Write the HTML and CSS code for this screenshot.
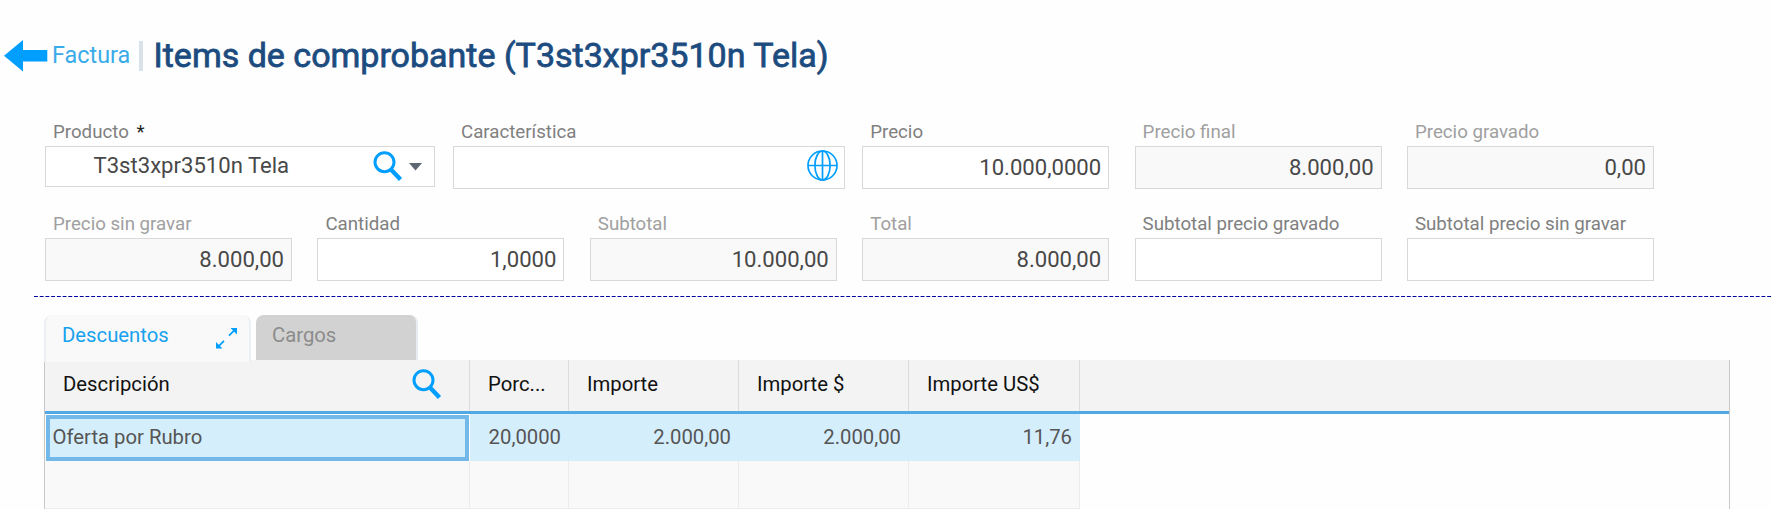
FILE: index.html
```html
<!DOCTYPE html>
<html lang="es">
<head>
<meta charset="utf-8">
<title>Items de comprobante</title>
<link rel="stylesheet" href="styles.css">
</head>
<body>
<header class="head">
  <svg class="back" width="44" height="32" viewBox="0 0 44 32"><path d="M0 15.8 19 0V10H43.3V21.5H19V31.5Z" fill="#009fff"/></svg>
  <a class="crumb">Factura</a>
  <span class="bar"></span>
  <h1 class="title">Items de comprobante (T3st3xpr3510n Tela)</h1>
</header>

<form class="form">
  <div class="row">
    <div class="field wide">
      <label class="label">Producto <span class="req">*</span></label>
      <div class="input combo">
        <span class="combo-text">T3st3xpr3510n Tela</span>
        <svg class="lens" width="30" height="31" viewBox="0 0 30 31"><circle cx="11.5" cy="11.2" r="9.5" fill="none" stroke="#009fff" stroke-width="3"/><path d="M17.5 18 27.5 28.5" stroke="#009fff" stroke-width="4.4"/></svg>
        <svg class="caret" width="13" height="8" viewBox="0 0 13 8"><path d="M0 0H13L6.5 7.5Z" fill="#5d6672"/></svg>
      </div>
    </div>
    <div class="field wide">
      <label class="label">Característica</label>
      <div class="input">
        <svg class="globe" width="31" height="31" viewBox="0 0 31 31" fill="none" stroke="#009fff" stroke-width="1.7"><circle cx="15.5" cy="15.5" r="14.5"/><ellipse cx="15.5" cy="15.5" rx="7.6" ry="14.5"/><path d="M15.5 1V30M1 15.5H30"/></svg>
      </div>
    </div>
    <div class="field"><label class="label">Precio</label><div class="input">10.000,0000</div></div>
    <div class="field off"><label class="label">Precio final</label><div class="input">8.000,00</div></div>
    <div class="field off"><label class="label">Precio gravado</label><div class="input">0,00</div></div>
  </div>
  <div class="row">
    <div class="field off"><label class="label">Precio sin gravar</label><div class="input">8.000,00</div></div>
    <div class="field"><label class="label">Cantidad</label><div class="input">1,0000</div></div>
    <div class="field off"><label class="label">Subtotal</label><div class="input">10.000,00</div></div>
    <div class="field off"><label class="label">Total</label><div class="input">8.000,00</div></div>
    <div class="field"><label class="label">Subtotal precio gravado</label><div class="input"></div></div>
    <div class="field"><label class="label">Subtotal precio sin gravar</label><div class="input"></div></div>
  </div>
</form>

<svg class="rule" width="1738" height="2"><path d="M0 .5H1738" stroke="#0000a0" stroke-dasharray="3.9 1.82"/></svg>

<nav class="tabs">
  <div class="tab active">Descuentos
    <svg width="22" height="21" viewBox="0 0 22 21" fill="#009fff" stroke="#009fff"><path d="M14.500 0H21V6.500ZM0 14V20.500H6.500Z" stroke="none"/><path d="M13 7.700 18 2.700M3 17.800 8 12.800" stroke-width="1.700"/></svg>
  </div>
  <div class="tab idle">Cargos</div>
</nav>

<section class="grid">
  <div class="line header">
    <div class="cell first">Descripción
      <svg class="lens" width="30" height="31" viewBox="0 0 30 31"><circle cx="11.5" cy="11.2" r="9.5" fill="none" stroke="#009fff" stroke-width="3"/><path d="M17.5 18 27.5 28.5" stroke="#009fff" stroke-width="4.4"/></svg>
    </div>
    <div class="cell">Porc...</div><div class="cell">Importe</div><div class="cell">Importe $</div><div class="cell">Importe US$</div>
  </div>
  <div class="line selected">
    <div class="cell first focus">Oferta por Rubro</div>
    <div class="cell">20,0000</div><div class="cell">2.000,00</div><div class="cell">2.000,00</div><div class="cell">11,76</div>
  </div>
  <div class="line empty">
    <div class="cell first"></div><div class="cell"></div><div class="cell"></div><div class="cell"></div><div class="cell"></div>
  </div>
</section>
</body>
</html>
```
FILE: styles.css
```css
* { box-sizing: border-box; }

html { overflow: hidden; }

body {
  margin: 0;
  height: 509px;
  overflow: hidden;
  background: #fefefe;
  font-family: Roboto, "Liberation Sans", sans-serif;
}

svg { display: block; flex: none; }

.head {
  display: flex;
  align-items: center;
  height: 112px;
  padding: 0 0 1px 4px;
}
.crumb { margin: 0 0 1px 4px; font-size: 23.4px; color: #3aabe9; width: 83px; white-space: nowrap; }
.bar { width: 4px; height: 30px; margin-left: 4px; background: #d9e2e9; }
.title {
  margin: 0 0 2px 10.5px;
  font-size: 34px;
  font-weight: 400;
  -webkit-text-stroke: 0.8px #1c4c7f;
  color: #1c4c7f;
  white-space: nowrap;
}

.form { display: flex; flex-direction: column; gap: 15px; padding: 0 0 0 45px; }
.row { display: flex; gap: 25.4px; height: 77px; }
.field { width: 247px; flex: none; }
.field.wide { width: 392px; margin-right: -8.2px; }
.field.wide:first-child { width: 390px; margin-right: -7.4px; }
.label {
  display: block;
  height: 34px;
  padding-left: 8px;
  font-size: 18.7px;
  line-height: 40px;
  color: #808080;
  white-space: nowrap;
}
.off .label { color: #a0a0a0; }
.req { margin-left: 3px; color: #222; }
.input {
  display: flex;
  align-items: center;
  justify-content: flex-end;
  height: 43px;
  padding: 0 7px 1px 0;
  border: 1px solid #d8d8d8;
  background: #fff;
  font-size: 22.1px;
  color: #484848;
}
.off .input { background: #f9f9f9; }
.combo { height: 41px; padding: 0 12px 0 0; }
.combo-text { margin-right: auto; padding: 0 0 3px 47.5px; }
.caret { margin-left: 6px; }
.globe { margin: -3px -1px 0 0; }

.rule { margin: 15px 0 0 34px; }

.tabs { display: flex; align-items: flex-start; gap: 5px; height: 45px; margin: 17px 0 0 44px; }
.tab { display: flex; font-size: 20.3px; line-height: 40px; border-radius: 8px 8px 0 0; }
.tab.active {
  position: relative;
  width: 207px;
  height: 47px;
  justify-content: space-between;
  padding: 0 11px 0 16px;
  border: solid #eceff4;
  border-width: 0 2px;
  background: #f9f9f9;
  color: #17a2ee;
}
.tab.active svg { margin-top: 13px; }
.tab.idle {
  width: 162px;
  height: 45px;
  padding-left: 16px;
  border-right: 2px solid #e8ebf1;
  background: #d2d2d2;
  color: #8c8c8c;
}

.grid {
  width: 1686px;
  height: 149px;
  margin-left: 44px;
  border: solid #c8c8c8;
  border-width: 0 1px;
}
.line { display: grid; grid-template-columns: 425px 99px 170px 170px 171px; }
.cell {
  display: flex;
  align-items: center;
  padding: 0 0 3px 18px;
  border-right: 1px solid #dcdcdc;
  font-size: 20.3px;
  white-space: nowrap;
}
.header { height: 54px; border-bottom: 3px solid #50a9e5; background: #f3f3f3; color: #111; }
.header .first { justify-content: space-between; padding-right: 27px; }
.selected { height: 47px; color: #555; }
.selected .cell { justify-content: flex-end; padding: 0 7px 1px 0; border-color: #d2edfb; background: #d5eefc; }
.selected .focus {
  justify-content: flex-start;
  margin: 1px 1px 0;
  padding: 0 0 2px 2.5px;
  border: 4px solid #72b9ea;
}
.empty { height: 48px; }
.empty .cell { border-color: #ececec; background: #f9f9f9; border-bottom: 1px solid #ececec; }
```
